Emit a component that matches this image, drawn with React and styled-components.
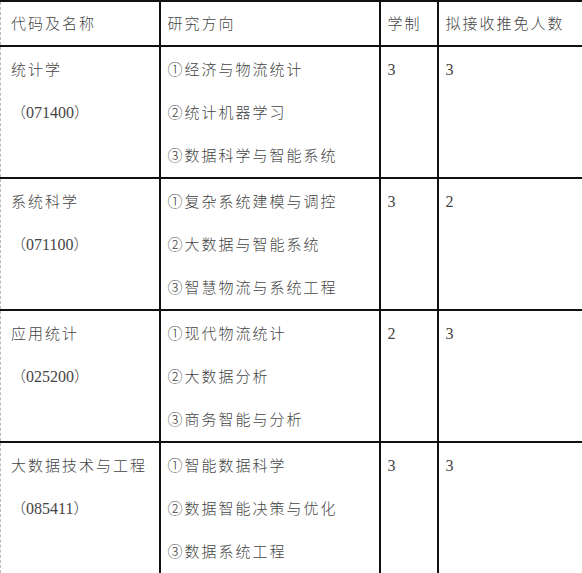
import styled, { createGlobalStyle } from "styled-components";

const GlobalStyle = createGlobalStyle`
  html, body {
    margin: 0;
    padding: 0;
    background: #fff;
    overflow: hidden;
  }
`;

const programs = [
  {
    name: "统计学",
    code: "071400",
    directions: ["①经济与物流统计", "②统计机器学习", "③数据科学与智能系统"],
    years: "3",
    quota: "3",
  },
  {
    name: "系统科学",
    code: "071100",
    directions: ["①复杂系统建模与调控", "②大数据与智能系统", "③智慧物流与系统工程"],
    years: "3",
    quota: "2",
  },
  {
    name: "应用统计",
    code: "025200",
    directions: ["①现代物流统计", "②大数据分析", "③商务智能与分析"],
    years: "2",
    quota: "3",
  },
  {
    name: "大数据技术与工程",
    code: "085411",
    directions: ["①智能数据科学", "②数据智能决策与优化", "③数据系统工程"],
    years: "3",
    quota: "3",
  },
];

function App() {
  return (
    <>
      <GlobalStyle />
      <Table>
        <colgroup>
          <col style={{ width: 159 }} />
          <col style={{ width: 220 }} />
          <col style={{ width: 58 }} />
          <col style={{ width: 200 }} />
        </colgroup>
        <thead>
          <tr>
            <Cell $first $head>
              <Line>代码及名称</Line>
            </Cell>
            <Cell $head>
              <Line>研究方向</Line>
            </Cell>
            <Cell $head>
              <Line>学制</Line>
            </Cell>
            <Cell $head>
              <Line>拟接收推免人数</Line>
            </Cell>
          </tr>
        </thead>
        <tbody>
          {programs.map((p) => (
            <tr key={p.code}>
              <Cell $first>
                <Line>{p.name}</Line>
                <Line>
                  <Paren>（</Paren>
                  <Digits>{p.code}</Digits>
                  <Paren>）</Paren>
                </Line>
              </Cell>
              <Cell>
                {p.directions.map((d) => (
                  <Line key={d}>{d}</Line>
                ))}
              </Cell>
              <Cell>
                <Line>
                  <Digits>{p.years}</Digits>
                </Line>
              </Cell>
              <Cell>
                <Line>
                  <Digits>{p.quota}</Digits>
                </Line>
              </Cell>
            </tr>
          ))}
        </tbody>
      </Table>
    </>
  );
}

const Table = styled.table`
  border-collapse: collapse;
  table-layout: fixed;
  width: 637px;
  font-family: "Noto Sans CJK SC", sans-serif;
  color: #444;
`;

const Cell = styled.td`
  vertical-align: top;
  padding: ${(p) => (p.$head ? "0" : "1px")} 8px 0
    ${(p) => (p.$first ? "10px" : "7px")};
  border: 2px solid #111;
  border-left: ${(p) => (p.$first ? "1px dashed #bbb" : "2px solid #111")};
`;

const Line = styled.div`
  height: 43px;
  line-height: 41px;
  font-size: 15px;
  letter-spacing: 2px;
  font-weight: 300;
  white-space: nowrap;
`;

const Digits = styled.span`
  font-family: "Liberation Serif", serif;
  font-size: 16px;
  letter-spacing: 0;
  font-weight: 400;
`;

const Paren = styled.span`
  letter-spacing: 0;
`;

export default App;
